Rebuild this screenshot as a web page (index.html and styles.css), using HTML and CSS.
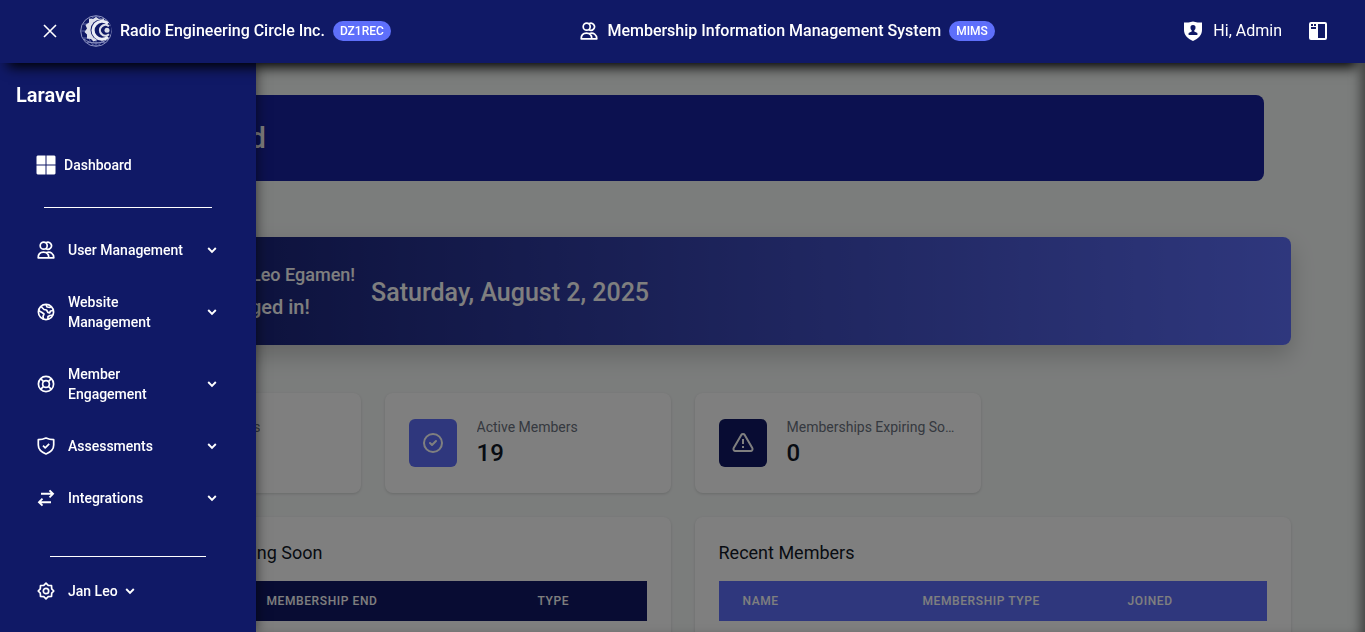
FILE: index.html
```
<!DOCTYPE html>
<html lang="en">
<head>
<meta charset="utf-8">
<title>Membership Information Management System</title>
<link rel="stylesheet" href="styles.css">
</head>
<body>
<svg class="defs" aria-hidden="true">
  <symbol id="users" viewBox="0 0 20 20"><g fill="none" stroke="currentColor" stroke-width="1.700" stroke-linejoin="round"><circle cx="7.700" cy="5.700" r="3.500"/><path d="M9.800 2.900a3.500 3.500 0 1 1 0 5.600"/><path d="M2.200 17.800c0-3.400 1.800-5.700 5.200-5.700s5.400 2.300 5.400 5.700zM10.500 12.500c4-1.200 7.300 1 7.300 5.300h-5"/></g></symbol>
  <symbol id="chevron" viewBox="0 0 12 12"><path d="M2.200 4 6 7.800 9.800 4" fill="none" stroke="currentColor" stroke-width="1.900"/></symbol>
</svg>

<header class="topbar">
  <div class="group">
    <button class="icon-button" type="button" aria-label="Close menu"><svg class="icon-20" viewBox="0 0 20 20"><path d="m4 4 12 12m0-12-12 12" stroke="currentColor" stroke-width="1.600"/></svg></button>
    <svg class="logo" viewBox="0 0 32 32" fill="none" aria-hidden="true">
      <circle cx="16" cy="16" r="15.300" stroke="#8f95c2"/>
      <g stroke="#6a72ae" stroke-width=".9"><ellipse cx="16" cy="16" rx="8" ry="15"/><path d="M1 16h30M3 9h26M3 23h26M7 27.500h18M16 1v30"/></g>
      <path d="M24 3.500 19 4l-3-2-3 2-4-.5v4L5.500 10 7 13.500 4.500 17 7 19.500v4l4 .5 2.500 2.500 4-1.500h8z" fill="#dcdeea"/>
      <circle cx="21" cy="15" r="10.500" fill="#101966"/>
      <path d="M28 8.500a9 9 0 1 0 0 13.500" stroke="#eceef6" stroke-width="3.200"/>
      <path d="M29 11.200a5.400 5.400 0 1 0 0 8" stroke="#dcdeea" stroke-width="2.200"/>
      <circle cx="27" cy="15.300" r="2.500" fill="#dcdeea"/>
      <path d="M4 24c6 5 16 6 24 0" stroke="#8f95c2"/>
    </svg>
    <span class="brand">Radio Engineering Circle Inc.</span>
    <span class="badge">DZ1REC</span>
  </div>
  <div class="group">
    <svg class="icon-20"><use href="#users"/></svg>
    <span class="brand">Membership Information Management System</span>
    <span class="badge">MIMS</span>
  </div>
  <div class="group">
    <svg class="icon-20" viewBox="0 0 20 20"><path fill="currentColor" fill-rule="evenodd" d="M10 .5c3 1 6 1.100 9 1.100v7.400c0 5-3.500 8.800-9 11-5.500-2.200-9-6-9-11V1.600c3 0 6-.1 9-1.100zM10 4a2.500 2.500 0 0 0-2.500 2.700c0 1.200.4 2 1.200 2.600v1.100L5.600 12v2h8.800v-2l-3.100-1.600V9.300c.8-.6 1.200-1.400 1.200-2.600A2.500 2.500 0 0 0 10 4z"/></svg>
    <span class="brand greeting">Hi, Admin</span>
    <button class="icon-button" type="button" aria-label="Toggle panel"><svg class="icon-20" viewBox="0 0 20 20"><path fill="currentColor" fill-rule="evenodd" d="M3 1h14q2 0 2 2v14q0 2-2 2H3q-2 0-2-2V3q0-2 2-2zm7 2v14h7V3zM3 3v2h2V3zm3 0v2h2V3zM3 6v2h5V6z"/></svg></button>
  </div>
</header>

<aside class="sidebar">
  <p class="app-name">Laravel</p>
  <nav class="menu" aria-label="Main">
    <a class="item dashboard" href="#"><svg class="icon-20" viewBox="0 0 20 20"><path fill="currentColor" d="M1.500.5h8v9h-9v-8zM10.500.5h8l1 1v8h-9zM.5 10.500h9v9h-8l-1-1zM10.500 10.500h9v8l-1 1h-8z"/></svg>Dashboard</a>
    <hr class="rule">
    <button class="item" type="button"><svg class="icon-20"><use href="#users"/></svg><span class="label">User Management</span><svg class="chevron"><use href="#chevron"/></svg></button>
    <button class="item" type="button"><svg class="icon-20" viewBox="0 0 20 20" fill="none" stroke="currentColor" stroke-width="1.700" stroke-linejoin="round"><circle cx="10" cy="10" r="7.600"/><path d="M5 4.500 8 7.500l2.500.5L12 10.500l1.500.5 1-2 3-.5M10 2.500 11 5l3 .500 1-1M2.500 8.500l3.500 2 2 1.500-1 2.500.5 3M12 17.500v-3l2-1 3-.5"/></svg><span class="label">Website Management</span><svg class="chevron"><use href="#chevron"/></svg></button>
    <button class="item" type="button"><svg class="icon-20" viewBox="0 0 20 20" fill="none" stroke="currentColor" stroke-width="1.700"><circle cx="10" cy="10" r="7.600"/><circle cx="10" cy="10" r="3.400"/><path d="m4.500 4.500 3.100 3.100m4.800 4.800 3.100 3.100m0-11-3.100 3.100m-4.800 4.800-3.100 3.100"/></svg><span class="label">Member Engagement</span><svg class="chevron"><use href="#chevron"/></svg></button>
    <button class="item" type="button"><svg class="icon-20" viewBox="0 0 20 20" fill="none" stroke="currentColor" stroke-width="1.700" stroke-linejoin="round"><path d="M10 2c2.500 1.200 5 1.700 7.700 1.700V9c0 4-3.200 7.200-7.700 9-4.500-1.800-7.700-5-7.700-9V3.700C5 3.700 7.500 3.200 10 2z"/><path d="m7 9.700 2.200 2.200 4-4"/></svg><span class="label">Assessments</span><svg class="chevron"><use href="#chevron"/></svg></button>
    <button class="item" type="button"><svg class="icon-20" viewBox="0 0 20 20" fill="none" stroke="currentColor" stroke-width="1.900"><path d="M5 5.800h12M13.500 2.300 17 5.800l-3.500 3.500M15 14.200H3M6.500 10.700 3 14.200l3.500 3.500"/></svg><span class="label">Integrations</span><svg class="chevron"><use href="#chevron"/></svg></button>
    <hr class="rule rule-account">
    <button class="item account" type="button"><svg class="icon-20" viewBox="0 0 20 20" fill="none" stroke="currentColor" stroke-width="1.700" stroke-linejoin="round"><circle cx="10" cy="10" r="2.700"/><path d="M10 2.200 12.200 4.300 15.500 4.500 15.700 7.800 17.800 10 15.700 12.200 15.500 15.500 12.200 15.700 10 17.800 7.800 15.700 4.500 15.500 4.300 12.200 2.200 10 4.300 7.800 4.500 4.500 7.800 4.300z"/></svg><span class="label">Jan Leo</span><svg class="chevron"><use href="#chevron"/></svg></button>
  </nav>
</aside>

<main class="page">
  <div class="content">
    <div class="title-bar"><h1 class="title">Dashboard</h1></div>
    <section class="welcome">
      <div class="welcome-text"><p class="hello">Welcome back, Jan Leo Egamen!</p><p class="status">You have logged in!</p></div>
      <p class="date">Saturday, August 2, 2025</p>
    </section>
    <section class="stats">
      <article class="card stat">
        <span class="tile tile-dark"><svg class="icon-24"><use href="#users"/></svg></span>
        <div class="stat-text"><p class="stat-label">Total Members</p><p class="stat-value">19</p></div>
      </article>
      <article class="card stat">
        <span class="tile"><svg class="icon-24" viewBox="0 0 24 24" fill="none" stroke="currentColor" stroke-width="2" stroke-linecap="round" stroke-linejoin="round"><circle cx="12" cy="12" r="9"/><path d="m9 12 2 2 4-4"/></svg></span>
        <div class="stat-text"><p class="stat-label">Active Members</p><p class="stat-value">19</p></div>
      </article>
      <article class="card stat">
        <span class="tile tile-dark"><svg class="icon-24" viewBox="0 0 24 24" fill="none" stroke="currentColor" stroke-width="2" stroke-linejoin="round"><path d="M10.300 3.900 2.700 17a2 2 0 0 0 1.700 3h15.200a2 2 0 0 0 1.700-3L13.700 3.900a2 2 0 0 0-3.400 0zM12 8v5m0 2v2"/></svg></span>
        <div class="stat-text"><p class="stat-label">Memberships Expiring Soon</p><p class="stat-value">0</p></div>
      </article>
    </section>
    <section class="panels">
      <article class="card panel">
        <h2 class="panel-title">Memberships Expiring Soon</h2>
        <table class="table table-dark"><thead><tr><th class="col-expiring-name">Name</th><th class="col-end">Membership End</th><th>Type</th></tr></thead></table>
      </article>
      <article class="card panel">
        <h2 class="panel-title">Recent Members</h2>
        <table class="table"><thead><tr><th class="col-name">Name</th><th class="col-type">Membership Type</th><th>Joined</th></tr></thead></table>
      </article>
    </section>
  </div>
  <div class="overlay"></div>
</main>
</body>
</html>
```
FILE: styles.css
```
* { box-sizing: border-box; }
body {
  margin: 0;
  height: 100vh;
  overflow: hidden;
  background: #f7faf9;
  color: #111827;
  font: 500 14px/20px Roboto, "Liberation Sans", sans-serif;
}
p, h1, h2 { margin: 0; }
button { padding: 0; border: 0; background: none; color: inherit; font: inherit; text-align: left; }
svg { display: block; flex: none; }
.defs { position: absolute; width: 0; height: 0; }
.icon-20 { width: 20px; height: 20px; }
.icon-24 { width: 24px; height: 24px; }

.topbar {
  position: fixed;
  inset: 0 0 auto;
  z-index: 3;
  display: flex;
  align-items: center;
  justify-content: space-between;
  height: 63px;
  padding: 0 37px 1px 40px;
  background: #101966;
  color: #fff;
  box-shadow: 0 12px 12px -8px #000;
}
.group { display: flex; align-items: center; gap: 8px; }
.logo { width: 32px; height: 32px; margin-left: 12px; }
.brand { font-size: 16px; line-height: 24px; }
.badge { padding: 0 7px; border-radius: 10px; background: #5e6ffb; font-size: 12px; line-height: 20px; }
.greeting { margin: 0 18px 0 2px; font-weight: 400; }

.sidebar {
  position: fixed;
  inset: 63px auto 0 0;
  z-index: 2;
  width: 256px;
  padding: 18px 16px;
  background: #101966;
  color: #fff;
  box-shadow: 0 0 12px rgba(0, 0, 0, .6);
}
.app-name { font-size: 20px; line-height: 28px; font-weight: 600; }
.menu { display: flex; flex-direction: column; padding: 30px 20px 0; }
.item { display: flex; align-items: center; gap: 12px; width: 100%; padding: 16px 0; color: inherit; text-decoration: none; }
.dashboard { gap: 8px; }
.label { flex: 1; max-width: 120px; }
.chevron { width: 12px; height: 12px; margin: 0 2px 0 auto; }
.rule { width: 168px; margin: 16px auto; border: 0; border-top: 1px solid #fff; }
.rule-account { width: 156px; margin: 32px auto 8px; }
.menu .rule-account { margin-top: 32px; }
.account .label { flex: none; }
.account .chevron { margin-left: -6px; }
.item + .rule-account { margin-top: 32px; }

.page { position: relative; height: 100vh; padding-top: 95px; overflow: hidden; }
.content { max-width: 1280px; margin: 0 auto; padding: 0 32px; }
.title-bar { margin: 0 27px; padding: 24px; border-radius: 8px; background: #1922a0; color: #fff; }
.title { font-size: 29px; line-height: 38px; font-weight: 500; }
.welcome {
  display: flex;
  align-items: center;
  gap: 16px;
  margin-top: 56px;
  padding: 22px 16px;
  border-radius: 8px;
  background: linear-gradient(90deg, #101966, #5e6ffb);
  color: #fff;
  box-shadow: 0 10px 25px rgba(0, 0, 0, .2);
}
.welcome-text { text-align: center; font-size: 18px; line-height: 32px; }
.status { font-size: 20px; }
.date { padding-top: 4px; font-size: 25px; line-height: 32px; }
.stats { display: grid; grid-template-columns: repeat(4, minmax(0, 1fr)); gap: 24px; margin-top: 48px; }
.card { padding: 24px; border-radius: 8px; background: #fff; box-shadow: 0 1px 3px rgba(0, 0, 0, .15); }
.stat { display: flex; align-items: center; gap: 20px; }
.stat-text { min-width: 0; }
.tile { display: grid; place-items: center; flex: none; width: 48px; height: 48px; border-radius: 6px; background: #5e6ffb; color: #fff; }
.tile-dark { background: #101966; }
.stat-label { overflow: hidden; color: #6b7280; font-weight: 400; text-overflow: ellipsis; white-space: nowrap; }
.stat-value { font-size: 24px; line-height: 32px; }
.panels { display: grid; grid-template-columns: 1fr 1fr; gap: 24px; margin-top: 24px; }
.panel { height: 320px; }
.panel-title { font-size: 18px; line-height: 24px; font-weight: 400; }
.table { width: 100%; margin-top: 16px; border-collapse: collapse; table-layout: fixed; background: #5e6ffb; color: #fff; }
.table-dark { background: #101966; }
.table th { padding: 12px 24px; font-size: 12px; line-height: 16px; font-weight: 500; letter-spacing: .05em; text-align: left; text-transform: uppercase; }
.col-expiring-name { width: 144px; }
.col-end { width: 271px; }
.col-name { width: 180px; }
.col-type { width: 205px; }
.overlay { position: absolute; inset: 0; background: rgba(0, 0, 0, .5); box-shadow: inset -10px 0 12px -6px rgba(0, 0, 0, .5); }
```
